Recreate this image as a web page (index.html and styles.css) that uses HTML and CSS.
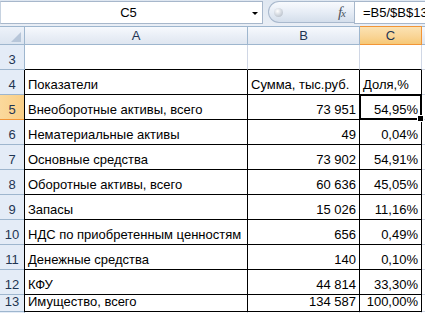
FILE: index.html
```html
<!DOCTYPE html>
<html lang="ru">
<head>
<meta charset="utf-8">
<title>Excel</title>
<link rel="stylesheet" href="styles.css">
</head>
<body>
<div class="topbar">
  <div class="namebox"><span class="name">C5</span><span class="arrow"></span></div>
  <div class="fxpill"><span class="dot"></span><span class="fx">f<span class="x">x</span></span></div>
  <div class="formula">=B5/$B$13</div>
</div>
<div class="sheet">
  <div class="corner"><span class="tri"></span></div>
  <div class="ch">A</div>
  <div class="ch">B</div>
  <div class="ch sel">C</div>
  <div class="ch last"></div>

  <div class="rh">3</div>
  <div class="c a topb"></div>
  <div class="c b topb"></div>
  <div class="c k topb"></div>
  <div class="c d"></div>

  <div class="rh">4</div>
  <div class="c a bd">Показатели</div>
  <div class="c b bd left">Сумма, тыс.руб.</div>
  <div class="c k bd left">Доля,%</div>
  <div class="c d"></div>

  <div class="rh sel">5</div>
  <div class="c a bd">Внеоборотные активы, всего</div>
  <div class="c b bd">73 951</div>
  <div class="c k bd active">54,95%</div>
  <div class="c d"></div>

  <div class="rh">6</div>
  <div class="c a bd">Нематериальные активы</div>
  <div class="c b bd">49</div>
  <div class="c k bd">0,04%</div>
  <div class="c d"></div>

  <div class="rh">7</div>
  <div class="c a bd">Основные средства</div>
  <div class="c b bd">73 902</div>
  <div class="c k bd">54,91%</div>
  <div class="c d"></div>

  <div class="rh">8</div>
  <div class="c a bd">Оборотные активы, всего</div>
  <div class="c b bd">60 636</div>
  <div class="c k bd">45,05%</div>
  <div class="c d"></div>

  <div class="rh">9</div>
  <div class="c a bd">Запасы</div>
  <div class="c b bd">15 026</div>
  <div class="c k bd">11,16%</div>
  <div class="c d"></div>

  <div class="rh">10</div>
  <div class="c a bd">НДС по приобретенным ценностям</div>
  <div class="c b bd">656</div>
  <div class="c k bd">0,49%</div>
  <div class="c d"></div>

  <div class="rh">11</div>
  <div class="c a bd">Денежные средства</div>
  <div class="c b bd">140</div>
  <div class="c k bd">0,10%</div>
  <div class="c d"></div>

  <div class="rh">12</div>
  <div class="c a bd">КФУ</div>
  <div class="c b bd">44 814</div>
  <div class="c k bd">33,30%</div>
  <div class="c d"></div>

  <div class="rh">13</div>
  <div class="c a bd">Имущество, всего</div>
  <div class="c b bd">134 587</div>
  <div class="c k bd">100,00%</div>
  <div class="c d"></div>

  <div class="rh"></div>
  <div class="c a"></div>
  <div class="c b"></div>
  <div class="c k"></div>
  <div class="c d"></div>
</div>
</body>
</html>
```

FILE: styles.css
```css
* { box-sizing: border-box; }
html, body {
  margin: 0;
  padding: 0;
  width: 425px;
  height: 313px;
  overflow: hidden;
  background: #ffffff;
  font-family: "Liberation Sans", Arial, sans-serif;
  font-size: 13px;
  color: #000;
}

/* ---------- formula bar ---------- */
.topbar {
  height: 26px;
  display: flex;
  align-items: flex-start;
  padding-top: 1px;
  background: linear-gradient(#dfe7f1, #e9eef5);
}
.namebox {
  width: 263px;
  height: 23px;
  background: #fff;
  border: 1px solid #a7b7cb;
  border-left: 1px solid #c6d2e0;
  display: flex;
  align-items: center;
  position: relative;
}
.name {
  flex: 1;
  text-align: center;
  line-height: 21px;
  padding-left: 4px;
}
.arrow {
  width: 0;
  height: 0;
  border-left: 3px solid transparent;
  border-right: 3px solid transparent;
  border-top: 3px solid #000;
  margin-right: 4px;
  margin-top: 1px;
}
.fxpill {
  margin-left: 5px;
  width: 86px;
  height: 22px;
  border: 1px solid #a9b9cd;
  border-right: 0;
  border-radius: 11px 0 0 11px;
  background: linear-gradient(#f8fafd 0%, #e7edf6 50%, #d4deeb 100%);
  display: flex;
  align-items: center;
  justify-content: space-between;
  padding: 0 9px 0 5px;
}
.dot {
  width: 9px;
  height: 9px;
  border-radius: 50%;
  background: radial-gradient(circle at 40% 35%, #ffffff 0%, #d6dbe2 45%, #a9b1bc 100%);
}
.fx {
  font-family: "Liberation Serif", "DejaVu Serif", serif;
  font-style: italic;
  font-size: 15px;
  color: #4d5560;
  line-height: 20px;
  letter-spacing: -1px;
}
.fx .x { font-size: 11px; }
.formula {
  flex: 1;
  height: 23px;
  background: #fff;
  border: 1px solid #a7b7cb;
  border-right: 0;
  padding-left: 8px;
  line-height: 21px;
  white-space: nowrap;
  overflow: hidden;
}

/* ---------- sheet ---------- */
.sheet {
  display: grid;
  grid-template-columns: 25px 223px 112px 62px 1fr;
  grid-template-rows: 19px repeat(10, 25px) 17px 1fr;
  height: 287px;
}
.corner {
  background: linear-gradient(#edf2f9, #dbe4f0);
  border-top: 1px solid #9eb6ce;
  border-right: 1px solid #9eb6ce;
  border-bottom: 1px solid #9eb6ce;
  position: relative;
}
.tri {
  position: absolute;
  right: 3px;
  bottom: 2px;
  width: 0;
  height: 0;
  border-left: 10px solid transparent;
  border-bottom: 10px solid #b7c6d9;
}
.ch {
  background: linear-gradient(#f7f9fd 0%, #e9eef6 55%, #dfe6f0 100%);
  border-top: 1px solid #9eb6ce;
  border-right: 1px solid #9eb6ce;
  border-bottom: 1px solid #9eb6ce;
  text-align: center;
  line-height: 17px;
  color: #1f3552;
}
.ch.sel {
  background: linear-gradient(#fbe3b4 0%, #f9d596 55%, #f6c877 100%);
  border-color: #f29536;
  border-top-color: #f29536;
}
.ch.last { border-right: 0; }

.rh {
  background: #e4ecf7;
  border-right: 1px solid #9eb6ce;
  border-bottom: 1px solid #9eb6ce;
  color: #1f3552;
  display: flex;
  align-items: flex-end;
  justify-content: center;
  padding-bottom: 2px;
  line-height: 15px;
}
.rh.sel {
  background: linear-gradient(90deg, #fbd99c, #f9cf87);
  border-bottom-color: #f29536;
  border-right-color: #f29536;
}

.c {
  border-right: 1px solid #d0d7e5;
  border-bottom: 1px solid #d0d7e5;
  display: flex;
  align-items: flex-end;
  justify-content: flex-end;
  padding: 0 3px 2px 3px;
  line-height: 15px;
  white-space: nowrap;
}
.c.a {
  justify-content: flex-start;
  overflow: visible;
}
.c.d { border-right: 0; }
.c.left { justify-content: flex-start; }
.c.topb { border-bottom-color: #000; }
.c.bd {
  border-right-color: #000;
  border-bottom-color: #000;
}
.c.a.bd { box-shadow: -1px 0 0 #000; }

.c.active { position: relative; }
.c.active::after {
  content: "";
  position: absolute;
  left: -1px;
  top: -1px;
  right: -1px;
  bottom: -1px;
  border: 2px solid #000;
}
.c.active::before {
  content: "";
  position: absolute;
  right: -3px;
  bottom: -3px;
  width: 5px;
  height: 5px;
  background: #000;
  border: 1px solid #fff;
  z-index: 2;
}
```
